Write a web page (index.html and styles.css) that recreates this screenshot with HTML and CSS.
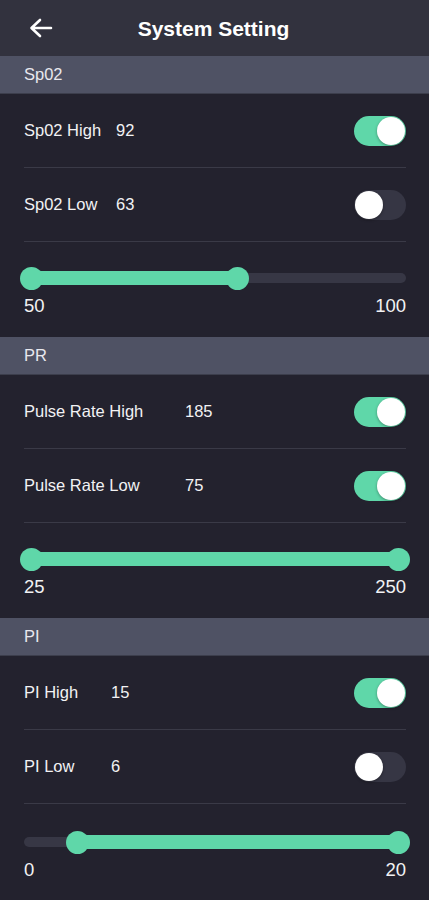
FILE: index.html
```html
<!DOCTYPE html>
<html lang="en">
<head>
    <meta charset="UTF-8">
    <meta name="viewport" content="width=device-width, initial-scale=1.0">
    <title>System Setting</title>
    <link rel="stylesheet" href="styles.css">
</head>
<body>
    <header class="topbar">
        <button class="back" type="button" aria-label="Back">
            <svg width="24" height="20" viewBox="0 0 24 20">
                <path d="M22 10H3M11 2L2.5 10L11 18" fill="none" stroke="#fff" stroke-width="2.6" stroke-linecap="round" stroke-linejoin="round"/>
            </svg>
        </button>
        <h1>System Setting</h1>
    </header>

    <div class="section-title">Sp02</div>
    <div class="group">
        <div class="row">
            <span class="label label-spo2">Sp02 High</span>
            <span class="value">92</span>
            <span class="toggle on"></span>
        </div>
        <div class="row">
            <span class="label label-spo2">Sp02 Low</span>
            <span class="value">63</span>
            <span class="toggle"></span>
        </div>
        <div class="slider">
            <div class="track">
                <div class="fill" style="--from:0%;--to:56.3%"></div>
            </div>
            <div class="limits"><span>50</span><span>100</span></div>
        </div>
    </div>

    <div class="section-title">PR</div>
    <div class="group">
        <div class="row">
            <span class="label label-pr">Pulse Rate High</span>
            <span class="value">185</span>
            <span class="toggle on"></span>
        </div>
        <div class="row">
            <span class="label label-pr">Pulse Rate Low</span>
            <span class="value">75</span>
            <span class="toggle on"></span>
        </div>
        <div class="slider">
            <div class="track">
                <div class="fill" style="--from:0%;--to:100%"></div>
            </div>
            <div class="limits"><span>25</span><span>250</span></div>
        </div>
    </div>

    <div class="section-title">PI</div>
    <div class="group">
        <div class="row">
            <span class="label label-pi">PI High</span>
            <span class="value">15</span>
            <span class="toggle on"></span>
        </div>
        <div class="row">
            <span class="label label-pi">PI Low</span>
            <span class="value">6</span>
            <span class="toggle"></span>
        </div>
        <div class="slider slider-last">
            <div class="track">
                <div class="fill" style="--from:12.5%;--to:100%"></div>
            </div>
            <div class="limits"><span>0</span><span>20</span></div>
        </div>
    </div>
</body>
</html>
```

FILE: styles.css
```css
body {
    margin: 0;
    background-color: #23222e;
    color: #f2f2f4;
    font-family: "Liberation Sans", Arial, sans-serif;
    font-size: 16.5px;
}
.topbar {
    height: 56px;
    background-color: #32323e;
    display: flex;
    align-items: center;
    justify-content: center;
    position: relative;
}
.topbar h1 {
    margin: 0 0 0 -2px;
    padding-top: 2px;
    font-size: 21px;
    font-weight: bold;
    color: #fff;
}
.back {
    position: absolute;
    left: 28px;
    top: 18px;
    padding: 0;
    border: none;
    background: none;
    width: 26px;
    height: 22px;
}
.section-title {
    height: 38px;
    display: flex;
    align-items: center;
    padding-left: 24px;
    background-color: #4f5264;
    border-bottom: 1px solid #3c3e4c;
    box-sizing: border-box;
    color: #e8e8ee;
    font-size: 16.5px;
}
.group {
    padding: 0 23px 0 24px;
}
.row {
    height: 74px;
    box-sizing: border-box;
    border-bottom: 1px solid #3a3a47;
    display: flex;
    align-items: center;
}
.label {
    flex-shrink: 0;
}
.label-spo2 {
    width: 92px;
}
.label-pr {
    width: 161px;
}
.label-pi {
    width: 87px;
}
.value {
    flex: 1;
}
.toggle {
    width: 52px;
    height: 30px;
    border-radius: 15px;
    background-color: #363644;
    position: relative;
    flex-shrink: 0;
}
.toggle::after {
    content: "";
    position: absolute;
    top: 1px;
    left: 1px;
    width: 28px;
    height: 28px;
    border-radius: 50%;
    background-color: #fff;
    box-shadow: 0 1px 3px rgba(0, 0, 0, 0.35);
}
.toggle.on {
    background-color: #5fd7a9;
}
.toggle.on::after {
    left: 23px;
}
.slider {
    padding-top: 25px;
    height: 95px;
    box-sizing: border-box;
}
.slider-last {
    padding-top: 27px;
}
.track {
    height: 22px;
    position: relative;
}
.track::before {
    content: "";
    position: absolute;
    left: 0;
    right: 0;
    top: 6px;
    height: 10px;
    border-radius: 5px;
    background-color: #373745;
}
.fill {
    position: absolute;
    top: 4px;
    height: 14px;
    left: calc(7px + (100% - 14px) * var(--from) / 100%);
    right: calc(7px + (100% - 14px) * (100% - var(--to)) / 100%);
    background-color: #5fd7a9;
}
.fill::before,
.fill::after {
    content: "";
    position: absolute;
    top: -4px;
    width: 23px;
    height: 23px;
    border-radius: 50%;
    background-color: #5fd7a9;
}
.fill::before {
    left: -11px;
}
.fill::after {
    right: -11px;
}
.limits {
    display: flex;
    justify-content: space-between;
    margin-top: 7px;
    font-size: 18.5px;
    line-height: 20px;
}
```
